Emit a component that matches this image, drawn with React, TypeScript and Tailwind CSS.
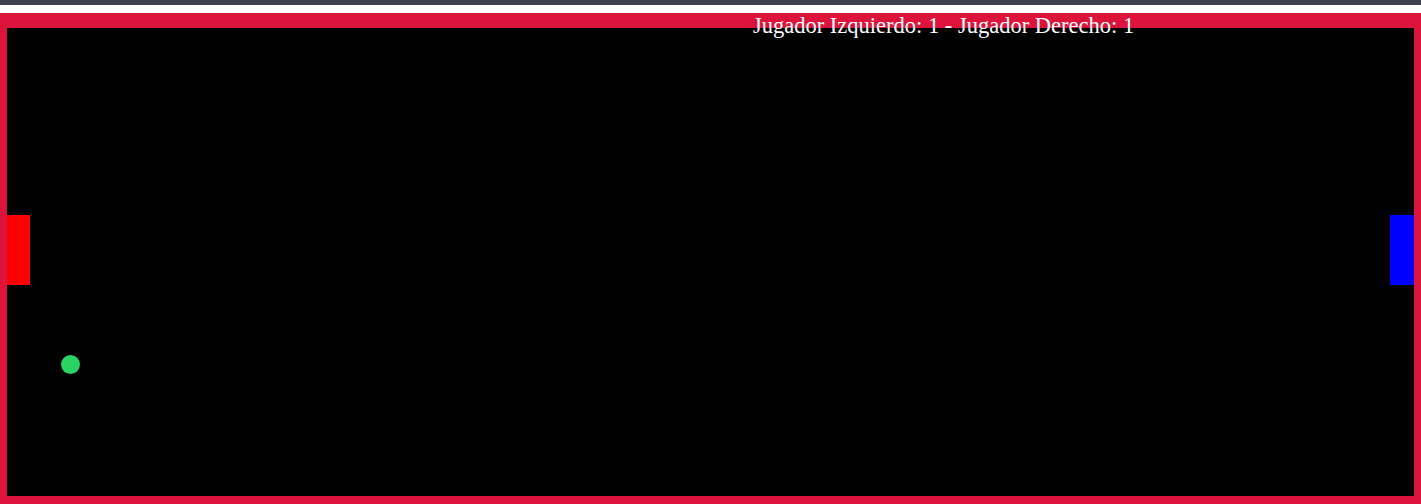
import React from "react";

// simple pong board snapshot
export default function App() {
  const leftScore = 1;
  const rightScore = 1;

  return (
    <div className="w-[1421px] h-[504px] bg-white flex flex-col" style={{ fontFamily: '"Liberation Serif", "Times New Roman", serif' }}>
      <div className="h-[5px] bg-[#3e404d]" />
      <div className="h-[8px] bg-white" />
      <div className="relative flex-1 bg-[#dc143c] pt-[15px] px-[7px] pb-[8px] flex">
        <div className="relative flex-1 bg-black">
          {/* paddles */}
          <div className="absolute left-0 top-[187px] w-[23px] h-[70px] bg-[#ff0000]" />
          <div className="absolute right-0 top-[187px] w-[24px] h-[70px] bg-[#0000ff]" />
          {/* ball */}
          <div className="absolute left-[54px] top-[327px] w-[19px] h-[19px] rounded-full bg-[#28d464]" />
        </div>
        <div className="absolute left-[753px] top-0 text-white text-[22.5px] leading-[26px] whitespace-nowrap">
          Jugador Izquierdo: {leftScore} - Jugador Derecho: {rightScore}
        </div>
      </div>
    </div>
  );
}
